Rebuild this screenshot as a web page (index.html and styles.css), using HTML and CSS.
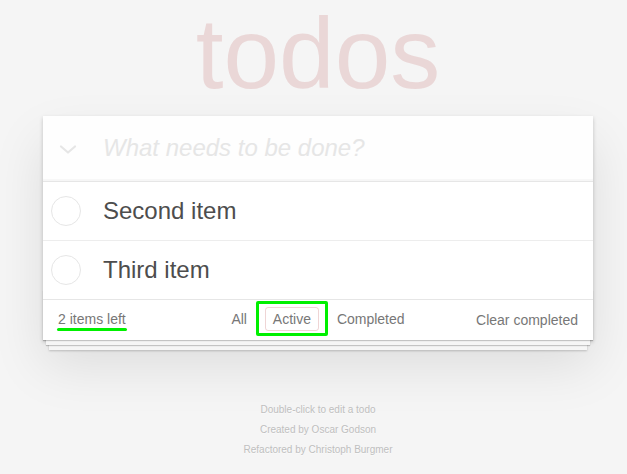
FILE: index.html
```html
<!DOCTYPE html>
<html lang="en">
<head>
<meta charset="utf-8">
<title>todos</title>
<link rel="stylesheet" href="styles.css">
</head>
<body>
<section class="todoapp">
  <h1 class="title">todos</h1>
  <div class="card">
    <header class="new-row">
      <span class="toggle-all">
        <svg width="18" height="10" viewBox="0 0 18 10"><polyline points="2,2.5 9,8.5 16,2.5" fill="none" stroke="#e6e6e6" stroke-width="2.2" stroke-linecap="round" stroke-linejoin="round"/></svg>
      </span>
      <input class="new-todo" placeholder="What needs to be done?">
    </header>
    <ul class="todo-list">
      <li class="todo"><span class="toggle"></span><label class="todo-label">Second item</label></li>
      <li class="todo"><span class="toggle"></span><label class="todo-label">Third item</label></li>
    </ul>
    <footer class="footer">
      <span class="todo-count"><span class="count-mark"><strong class="count-num">2</strong> items left</span></span>
      <ul class="filters">
        <li class="filter"><a class="filter-link">All</a></li>
        <li class="filter"><a class="filter-link selected">Active</a></li>
        <li class="filter"><a class="filter-link">Completed</a></li>
      </ul>
      <button class="clear-completed">Clear completed</button>
    </footer>
  </div>
</section>
<footer class="info">
  <p class="info-line">Double-click to edit a todo</p>
  <p class="info-line">Created by Oscar Godson</p>
  <p class="info-line">Refactored by Christoph Burgmer</p>
</footer>
</body>
</html>
```

FILE: styles.css
```css
html, body {
  margin: 0;
  padding: 0;
}

body {
  background: #f5f5f5;
  color: #4d4d4d;
  font: 14px "Liberation Sans", Arial, Helvetica, sans-serif;
  line-height: 1.4em;
}

.todoapp {
  width: 550px;
  margin: 0 0 0 43px;
}

.title {
  margin: 0;
  height: 116px;
  font-size: 100px;
  line-height: 107px;
  font-weight: 400;
  text-align: center;
  color: rgba(175, 47, 47, 0.15);
}

.card {
  background: #fff;
  box-shadow: 0 2px 4px 0 rgba(0, 0, 0, 0.2), 0 25px 50px 0 rgba(0, 0, 0, 0.1);
}

.new-row {
  display: flex;
  align-items: center;
  height: 65px;
  background: rgba(0, 0, 0, 0.003);
  box-shadow: inset 0 -2px 1px rgba(0, 0, 0, 0.03);
}

.toggle-all {
  width: 60px;
  flex: none;
  display: flex;
  padding-left: 16px;
  padding-top: 1px;
  box-sizing: border-box;
}

.toggle-all svg {
  display: block;
}

.new-todo {
  flex: 1;
  min-width: 0;
  height: 65px;
  box-sizing: border-box;
  padding: 16px 16px 18px 0;
  border: none;
  outline: none;
  background: transparent;
  font: 24px "Liberation Sans", Arial, sans-serif;
  line-height: 31px;
  color: #4d4d4d;
}

.new-todo::placeholder {
  font-style: italic;
  color: #e6e6e6;
}

.todo-list {
  margin: 0;
  padding: 0;
  list-style: none;
  border-top: 1px solid #e6e6e6;
}

.todo {
  display: flex;
  align-items: center;
  height: 58px;
  font-size: 24px;
  border-bottom: 1px solid #ededed;
}

.todo:last-child {
  border-bottom: none;
}

.toggle {
  flex: none;
  width: 30px;
  height: 30px;
  box-sizing: border-box;
  margin-left: 8px;
  border: 1px solid #e6e6e6;
  border-radius: 50%;
}

.todo-label {
  margin-left: 22px;
  line-height: 28px;
  color: #4d4d4d;
}

.footer {
  position: relative;
  display: grid;
  grid-template-columns: 1fr auto 1fr;
  align-items: start;
  height: 20px;
  padding: 10px 15px;
  color: #777;
  border-top: 1px solid #e6e6e6;
}

.footer::before {
  content: "";
  position: absolute;
  right: 0;
  bottom: 0;
  left: 0;
  height: 50px;
  overflow: hidden;
  box-shadow: 0 1px 1px rgba(0, 0, 0, 0.2),
              0 8px 0 -3px #f6f6f6,
              0 9px 1px -3px rgba(0, 0, 0, 0.2),
              0 16px 0 -6px #f6f6f6,
              0 17px 2px -6px rgba(0, 0, 0, 0.2);
  pointer-events: none;
}

.todo-count {
  text-align: left;
  justify-self: start;
}

.count-mark {
  position: relative;
}

.count-mark::after {
  content: "";
  position: absolute;
  left: -1px;
  right: -1px;
  top: 16.5px;
  height: 3px;
  border-radius: 2px;
  background: #00f000;
}

.count-num {
  font-weight: 400;
}

.filters {
  margin: 0;
  padding: 0;
  list-style: none;
  text-align: center;
  white-space: nowrap;
}

.filter {
  display: inline;
}

.filter-link {
  color: inherit;
  margin: 3px;
  padding: 3px 7px;
  border: 1px solid transparent;
  border-radius: 3px;
  text-decoration: none;
}

.filter-link.selected {
  position: relative;
  border-color: rgba(175, 47, 47, 0.2);
}

.filter-link.selected::after {
  content: "";
  position: absolute;
  top: -7px;
  bottom: -6px;
  left: -10px;
  right: -10px;
  border: 3px solid #00f000;
  border-radius: 2px;
}

.clear-completed {
  justify-self: end;
  margin: 0;
  padding: 0;
  border: 0;
  background: none;
  font: inherit;
  line-height: 20px;
  color: inherit;
  cursor: pointer;
}

.info {
  margin: 65px 0 0 43px;
  width: 550px;
  color: #bfbfbf;
  font-size: 10px;
  text-align: center;
  text-shadow: 0 1px 0 rgba(255, 255, 255, 0.5);
}

.info-line {
  margin: 0 0 10px;
  line-height: 10px;
}
```
